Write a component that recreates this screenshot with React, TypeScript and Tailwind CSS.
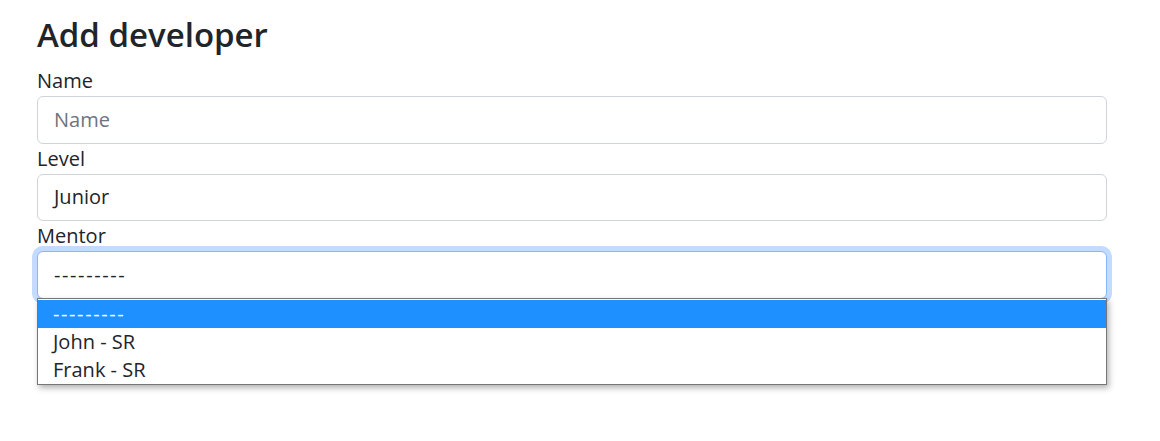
const font = { fontFamily: '"Open Sans", "Noto Sans", sans-serif' };

function Field({ label, children }: { label: string; children: React.ReactNode }) {
  return (
    <div>
      <label className="block text-[20px] leading-[30px] text-[#212529]">{label}</label>
      {children}
    </div>
  );
}

export default function App() {
  return (
    <div className="min-h-[441px] bg-white text-[#212529]" style={font}>
      <div className="px-[37px] pt-[12px] w-[1144px]">
        <h2 className="mb-[8px] text-[33px] font-semibold leading-[46px]">Add developer</h2>
        <form className="flex flex-col">
          <Field label="Name">
            <input
              type="text"
              placeholder="Name"
              className="block h-[47.5px] w-full rounded-[6px] border border-[#ced4da] bg-white px-[16px] text-[20px] text-[#212529] outline-none placeholder:text-[#6c757d]"
            />
          </Field>
          <Field label="Level">
            <div className="flex h-[47.5px] items-center rounded-[6px] border border-[#ced4da] bg-white px-[16px] text-[20px]">
              Junior
            </div>
          </Field>
          <Field label="Mentor">
            <div className="relative">
              <div className="flex h-[47.5px] items-center rounded-[6px] border border-[#86b7fe] bg-white px-[16px] text-[20px] shadow-[0_0_0_5px_rgba(13,110,253,0.25)]">
                <span className="tracking-[1.6px]">---------</span>
              </div>
              <ul className="absolute left-0 right-0 top-[47px] border border-[#767676] bg-white pt-[1px] text-[20px] leading-[28px] shadow-[2px_3px_6px_rgba(0,0,0,0.3)]">
                <li className="bg-[#1e90ff] px-[15px] text-white">
                  <span className="tracking-[1.6px]">---------</span>
                </li>
                <li className="px-[15px]">John - SR</li>
                <li className="px-[15px]">Frank - SR</li>
              </ul>
            </div>
          </Field>
        </form>
      </div>
    </div>
  );
}
